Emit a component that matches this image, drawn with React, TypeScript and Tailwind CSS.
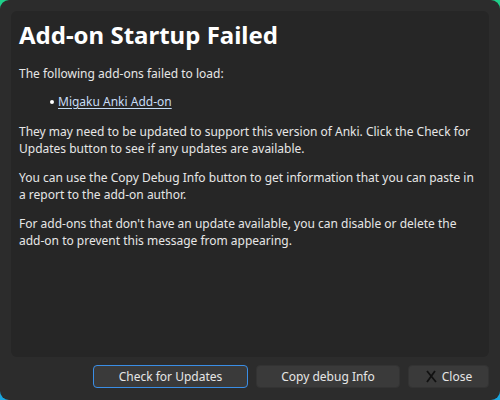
export default function App() {
  return (
    <div className="w-[500px] h-[400px] bg-gradient-to-b from-[#1fd08a] to-[#1aa6e0] font-['Noto_Sans',sans-serif]">
      <div className="w-full h-full rounded-[9px] bg-[#2c2c2c] p-[11px] pb-[12px] flex flex-col">
        <div className="flex-1 rounded-[6px] bg-[#262626] px-[8px] pt-[8px] text-[12px] leading-[17px] text-[#e6e6e6]">
          <h1 className="text-[24px] leading-[32px] font-bold text-white">Add-on Startup Failed</h1>
          <p className="mt-[14px]">The following add-ons failed to load:</p>
          <ul className="mt-[11px] ml-[31px]">
            <li className="flex items-center gap-[4px]">
              <span className="w-[4px] h-[4px] rounded-full bg-white" />
              <a className="underline text-[#c6dcf6] underline-offset-2">Migaku Anki Add-on</a>
            </li>
          </ul>
          <p className="mt-[13px]">
            They may need to be updated to support this version of Anki. Click the Check for Updates button to see if any updates are available.
          </p>
          <p className="mt-[12px]">
            You can use the Copy Debug Info button to get information that you can paste in a report to the add-on author.
          </p>
          <p className="mt-[12px]">
            For add-ons that don't have an update available, you can disable or delete the add-on to prevent this message from appearing.
          </p>
        </div>
        <div className="flex justify-end gap-[8px] mt-[8px] text-[12px] text-[#e6e6e6]">
          <button className="w-[155px] h-[23px] rounded-[4px] border border-[#3a8ee6] bg-[#3a3a3a]">Check for Updates</button>
          <button className="w-[144px] h-[23px] rounded-[4px] border border-[#333] bg-[#3a3a3a]">Copy debug Info</button>
          <button className="w-[81px] h-[23px] rounded-[4px] border border-[#333] bg-[#3a3a3a] flex items-center justify-center gap-[4px]">
            <svg width="13" height="13" viewBox="0 0 13 13">
              <path d="M2 1 L11 12 M10 1 L2 12" stroke="#111" strokeWidth="1.8" />
            </svg>
            Close
          </button>
        </div>
      </div>
    </div>
  );
}
